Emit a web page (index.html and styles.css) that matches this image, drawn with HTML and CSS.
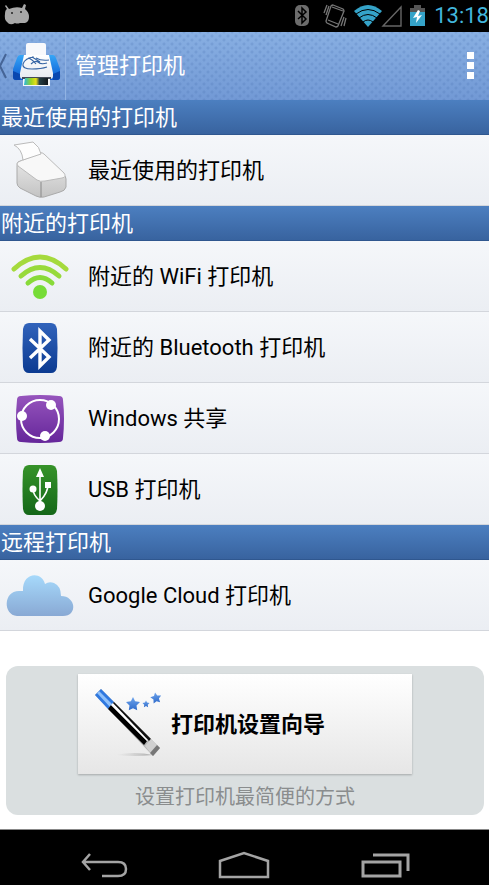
FILE: index.html
```html
<!DOCTYPE html>
<html lang="zh-CN">
<head>
    <meta charset="UTF-8">
    <meta name="viewport" content="width=device-width, initial-scale=1.0">
    <title>管理打印机</title>
    <link rel="stylesheet" href="styles.css">
</head>
<body>
    <div class="status-bar">
        <svg width="26" height="22" viewBox="0 0 26 22">
            <path d="M2 0l3 4q7-3 13-1l2-4 2 1-1 4q4 3 4 8 0 5-4 6h-5q-3 1-5 0-5 3-8-1-3-3-2-8 0-4 2-5L1 1z" fill="#a8a8a8"/>
            <circle cx="8" cy="8" r="1" fill="#222"/>
            <circle cx="17" cy="7" r="1" fill="#222"/>
        </svg>
        <div class="status-icons">
            <svg width="16" height="24" viewBox="0 0 16 24">
                <rect x="1" y="1" width="14" height="21" rx="5" fill="#6c6c6c"/>
                <path d="M4 7l8 8-4 4V4l4 4-8 7" fill="none" stroke="#000" stroke-width="1.5"/>
            </svg>
            <svg class="vibrate" width="22" height="24" viewBox="0 0 22 24">
                <g fill="none" stroke="#777" stroke-width="1.3">
                    <path d="M9 1l10 4q1 1 1 2l-6 15q-1 1-2 1l-9-4q-1-1-1-2L7 2q1-1 2-1zM4 16l10 4M8 3l11 4"/>
                    <path d="M3 1L0 9M5 2L2 11M20 13l-3 9M22 14l-2 8"/>
                </g>
            </svg>
            <svg class="wifi-small" width="28" height="24" viewBox="0 0 28 24">
                <path d="M0 7Q14-5 28 7L14 23z" fill="#35a3c8"/>
                <path d="M2 10q12-9 24 0M5 14q9-7 18 0M9 18q5-4 10 0" fill="none" stroke="#000" stroke-width="1"/>
            </svg>
            <svg width="20" height="24" viewBox="0 0 20 24">
                <path d="M1 22L19 3v19z" fill="none" stroke="#666" stroke-width="1.4"/>
            </svg>
            <svg class="battery" width="15" height="24" viewBox="0 0 15 24">
                <path d="M0 4h4V1h7v3h4v5H0z" fill="#555"/>
                <path d="M0 8h15v14H0z" fill="#35a3c8"/>
                <path d="M8 6l-5 8 4-1-1 6 6-8-4 1 2-5z" fill="#fff"/>
            </svg>
            <span class="clock">13:18</span>
        </div>
    </div>

    <header class="action-bar">
        <button class="up-btn" aria-label="返回">
            <svg width="62" height="46" viewBox="0 0 62 46">
                <defs>
                    <linearGradient id="printerBlue" x2="0" y2="1">
                        <stop offset="0" stop-color="#35a6f7"/>
                        <stop offset="1" stop-color="#0a58d2"/>
                    </linearGradient>
                    <linearGradient id="paperWhite" x2="0" y2="1">
                        <stop offset="0" stop-color="#fff"/>
                        <stop offset="1" stop-color="#e6e9ef"/>
                    </linearGradient>
                    <linearGradient id="inkColors">
                        <stop offset="0" stop-color="#28b8df"/>
                        <stop offset=".3" stop-color="#9bd420"/>
                        <stop offset=".5" stop-color="#e9de1b"/>
                        <stop offset=".65" stop-color="#243c44"/>
                        <stop offset="1" stop-color="#12171c"/>
                    </linearGradient>
                </defs>
                <path d="M6 11L0 23l6 12" fill="none" stroke="#456496" stroke-width="2"/>
                <path d="M20 12h33q2 0 3 3l4 11v8q0 3-3 3H16q-3 0-3-3v-8l4-11q1-3 3-3z" fill="url(#printerBlue)"/>
                <path d="M13 28l7 3v6h-4q-3 0-3-3zM60 28l-7 3v6h4q3 0 3-3z" fill="#0847b0"/>
                <path d="M26 2q0-2 2-2h16q2 0 2 2v10H26z" fill="#f8f9fc"/>
                <path d="M24 12h25l4 18v3q0 3-3 3H23q-3 0-3-3v-3z" fill="url(#paperWhite)"/>
                <path d="M34 14q-9 1-11 7-1 5 9 5 9 0 15-2M28 15q4 1 8 6M32 14q5 3 8 5M36 15q5 3 13 2M31 21q4-4 7-2 3 3 9 1" fill="none" stroke="#3564a4" stroke-width="1.1"/>
                <path d="M22 34h29v2H22z" fill="#454b58"/>
                <path d="M23 36h27v7H23z" fill="#f6f7f9"/>
                <path d="M25 35h23v7H24z" fill="url(#inkColors)"/>
            </svg>
        </button>
        <h1>管理打印机</h1>
        <button class="menu-btn" aria-label="更多">
            <svg width="8" height="28" viewBox="0 0 8 28">
                <path d="M0 0h7v7H0zM0 10h7v7H0zM0 20h7v7H0z" fill="#fff"/>
            </svg>
        </button>
    </header>

    <main>
        <section>
            <h2>最近使用的打印机</h2>
            <ul class="printer-list">
                <li>
                    <a href="#recent">
                        <span class="icon">
                            <svg width="54" height="58" viewBox="0 0 54 58">
                                <defs>
                                    <linearGradient id="boxGray" x2="0" y2="1">
                                        <stop offset="0" stop-color="#eee"/>
                                        <stop offset="1" stop-color="#c3c3c3"/>
                                    </linearGradient>
                                </defs>
                                <path d="M5 20l23-9 22 21q3 2 3 5v8q-1 4-6 5l-16 5q-4 1-8-1L7 46q-3-2-3-5V24q0-3 1-4z" fill="url(#boxGray)" stroke="#aaa" stroke-width="1"/>
                                <path d="M5 20l22-9q2-1 4 1l20 19q3 4-2 5l-17 3q-5 1-8-1L5 24q-2-2 0-4z" fill="#f8f8f8" stroke="#bbb" stroke-width="1"/>
                                <path d="M28 40v15" stroke="#888"/>
                                <path d="M10 18Q9 7 1 3l19-3q7 5 8 12z" fill="#fdfdfd" stroke="#bbb" stroke-width="1"/>
                            </svg>
                        </span>
                        最近使用的打印机
                    </a>
                </li>
            </ul>
        </section>

        <section>
            <h2>附近的打印机</h2>
            <ul class="printer-list">
                <li>
                    <a href="#wifi">
                        <span class="icon">
                            <svg width="58" height="46" viewBox="0 0 58 46">
                                <g fill="none" stroke-width="5" stroke-linecap="round">
                                    <path d="M3 15Q29-9 55 15" stroke="#a5da3d"/>
                                    <path d="M10 22q19-17 38 0" stroke="#98da3b"/>
                                    <path d="M17 29q12-11 24 0" stroke="#88da39"/>
                                </g>
                                <circle cx="29" cy="38" r="7" fill="#76dc37"/>
                            </svg>
                        </span>
                        附近的 WiFi 打印机
                    </a>
                </li>
                <li>
                    <a href="#bluetooth">
                        <span class="icon">
                            <svg width="36" height="52" viewBox="0 0 36 52">
                                <defs>
                                    <linearGradient id="tileBlue" x2="0" y2="1">
                                        <stop offset="0" stop-color="#3163bb"/>
                                        <stop offset="1" stop-color="#0b3a91"/>
                                    </linearGradient>
                                </defs>
                                <path d="M7 1h22q5 0 6 6 1 19 0 38-1 6-6 6H7q-5 0-6-6Q0 26 1 7q1-6 6-6z" fill="url(#tileBlue)"/>
                                <path d="M8 17l19 18-9 9V9l9 9L8 36" fill="none" stroke="#fff" stroke-width="3.4"/>
                            </svg>
                        </span>
                        附近的 Bluetooth 打印机
                    </a>
                </li>
                <li>
                    <a href="#windows">
                        <span class="icon">
                            <svg width="48" height="48" viewBox="0 0 48 48">
                                <defs>
                                    <linearGradient id="tilePurple" x2="0" y2="1">
                                        <stop offset="0" stop-color="#9655bd"/>
                                        <stop offset="1" stop-color="#65269a"/>
                                    </linearGradient>
                                </defs>
                                <path d="M5 1q19-2 38 0 4 0 4 4 2 19 0 38 0 4-4 4-19 2-38 0-4 0-4-4-2-19 0-38 0-4 4-4z" fill="url(#tilePurple)"/>
                                <circle cx="24" cy="24" r="19" fill="none" stroke="#fff" stroke-width="2"/>
                                <circle cx="35" cy="10" r="5" fill="#fff"/>
                                <circle cx="6" cy="21" r="5" fill="#fff"/>
                                <circle cx="29" cy="41" r="5" fill="#fff"/>
                            </svg>
                        </span>
                        Windows 共享
                    </a>
                </li>
                <li>
                    <a href="#usb">
                        <span class="icon">
                            <svg width="36" height="52" viewBox="0 0 36 52">
                                <defs>
                                    <linearGradient id="tileGreen" x2="0" y2="1">
                                        <stop offset="0" stop-color="#369329"/>
                                        <stop offset="1" stop-color="#146718"/>
                                    </linearGradient>
                                </defs>
                                <path d="M7 1h22q5 0 6 6 1 19 0 38-1 6-6 6H7q-5 0-6-6Q0 26 1 7q1-6 6-6z" fill="url(#tileGreen)"/>
                                <path d="M18 9v33M11 25q0 6 7 12M26 20q0 9-8 17" fill="none" stroke="#fff" stroke-width="1.6"/>
                                <path d="M18 4l4 9h-8zM23 18h6v6h-6z" fill="#fff"/>
                                <circle cx="11" cy="25" r="3.5" fill="#fff"/>
                                <circle cx="18" cy="42" r="5" fill="#fff"/>
                            </svg>
                        </span>
                        USB 打印机
                    </a>
                </li>
            </ul>
        </section>

        <section>
            <h2>远程打印机</h2>
            <ul class="printer-list">
                <li>
                    <a href="#cloud">
                        <span class="icon">
                            <svg width="68" height="42" viewBox="0 0 68 42">
                                <defs>
                                    <linearGradient id="cloudBlue" x2="0" y2="1">
                                        <stop offset="0" stop-color="#a6d9fb"/>
                                        <stop offset="1" stop-color="#89a9d4"/>
                                    </linearGradient>
                                </defs>
                                <path d="M11 41C-3 40-3 16 13 16h4C16-3 36-4 39 9q4-3 9-1 7 3 7 13c15 0 17 20 2 20z" fill="url(#cloudBlue)"/>
                            </svg>
                        </span>
                        Google Cloud 打印机
                    </a>
                </li>
            </ul>
        </section>

        <div class="wizard">
            <button class="wizard-btn">
                <svg width="70" height="70" viewBox="0 0 70 70">
                    <defs>
                        <linearGradient id="starBlue" x2="0" y2="1">
                            <stop offset="0" stop-color="#6fa5ec"/>
                            <stop offset="1" stop-color="#2f6bcb"/>
                        </linearGradient>
                        <linearGradient id="shadowGray">
                            <stop offset="0" stop-color="#ccc" stop-opacity="0"/>
                            <stop offset="1" stop-color="#aaa"/>
                        </linearGradient>
                        <path id="star" d="M0-10l3 6 7 1-5 5 1 7-6-3-6 3 1-7-5-5 7-1z"/>
                    </defs>
                    <path d="M22 66q20-4 38 0-18 2-38 0z" fill="url(#shadowGray)"/>
                    <path d="M2 6l6-6 59 59-7 8z" fill="#b4b4b4"/>
                    <path d="M2 6l6-6 13 13-6 7z" fill="#2f78e0"/>
                    <path d="M4 4l2-2 13 13-2 3z" fill="#8fc0fa"/>
                    <path d="M15 20l3-4 36 36-3 4z" fill="#000"/>
                    <path d="M18 16l2-2 36 36-2 2z" fill="#fff"/>
                    <path d="M20 14l1-1 37 37-2 2z" fill="#111"/>
                    <path d="M52 57l6-7 9 9-7 8z" fill="#d0d0d0"/>
                    <path d="M57 64l7-8 3 3-7 8z" fill="#777"/>
                    <g fill="url(#starBlue)">
                        <use href="#star" transform="translate(40 15) scale(.7)"/>
                        <use href="#star" transform="translate(53 15) scale(.35)"/>
                        <use href="#star" transform="translate(63 9) rotate(-10) scale(.55)"/>
                    </g>
                </svg>
                <span>打印机设置向导</span>
            </button>
            <p>设置打印机最简便的方式</p>
        </div>
    </main>

    <nav class="nav-bar">
        <button aria-label="返回">
            <svg width="48" height="28" viewBox="0 0 48 28">
                <path d="M10 2L3 10l7 8M3 10h35q8 0 8 7t-8 7H22" fill="none" stroke="#a4a4a4" stroke-width="2.5"/>
            </svg>
        </button>
        <button aria-label="主屏幕">
            <svg width="52" height="28" viewBox="0 0 52 28">
                <path d="M2 25V9l24-8 24 8v16z" fill="none" stroke="#a4a4a4" stroke-width="2.5"/>
            </svg>
        </button>
        <button aria-label="最近任务">
            <svg width="50" height="28" viewBox="0 0 50 28">
                <path d="M3 10h37v14H3zM13 3h35v16" fill="none" stroke="#a4a4a4" stroke-width="3"/>
            </svg>
        </button>
    </nav>
</body>
</html>
```

FILE: styles.css
```css
* {
    box-sizing: border-box;
}
body {
    margin: 0;
    min-height: 100vh;
    display: flex;
    flex-direction: column;
    background-color: #fff;
    font-family: Roboto, "Noto Sans CJK SC", sans-serif;
    font-size: 22px;
    line-height: 32px;
    color: #000;
}
button {
    border: none;
    padding: 0;
    background: none;
    font: inherit;
    color: inherit;
    cursor: pointer;
}
svg {
    display: block;
    flex-shrink: 0;
    overflow: visible;
}
/* 状态栏 */
.status-bar {
    display: flex;
    align-items: center;
    justify-content: space-between;
    height: 32px;
    padding-left: 4px;
    background-color: #000;
}
.status-icons {
    display: flex;
    align-items: center;
}
.vibrate {
    margin-left: 14px;
}
.wifi-small {
    margin-left: 8px;
}
.battery {
    margin: 0 9px 0 8px;
}
.clock {
    color: #42b6dc;
}
/* 标题栏 */
.action-bar {
    display: flex;
    align-items: center;
    height: 68px;
    background-color: #779fd8;
    background-image:
        radial-gradient(circle, rgba(65, 105, 170, 0.2) 1px, transparent 2px),
        radial-gradient(circle, rgba(65, 105, 170, 0.2) 1px, transparent 2px),
        linear-gradient(#88afe2, #7299d5);
    background-size: 8px 8px, 8px 8px, 100% 100%;
    background-position: 0 0, 4px 4px, 0 0;
}
.up-btn {
    display: flex;
    align-items: center;
    width: 66px;
    height: 100%;
    border-right: 1px solid #91b3e3;
}
h1 {
    flex-grow: 1;
    margin: 0;
    padding-left: 9px;
    font-size: 22px;
    font-weight: normal;
    color: #fff;
}
.menu-btn {
    padding: 8px 14px;
}
/* 打印机列表 */
h2 {
    margin: 0;
    height: 35px;
    padding-left: 1px;
    border-bottom: 1px solid #2f578f;
    background: linear-gradient(#4c7fc0, #38639f);
    font-size: 22px;
    line-height: 35px;
    font-weight: normal;
    color: #fff;
}
.printer-list {
    margin: 0;
    padding: 0;
    list-style: none;
}
.printer-list a {
    display: flex;
    align-items: center;
    height: 71px;
    padding-top: 2px;
    border-bottom: 1px solid #d3d6dc;
    background: linear-gradient(#f5f7fa, #ebeef3);
    color: #000;
    text-decoration: none;
}
.icon {
    display: flex;
    justify-content: center;
    width: 80px;
    margin-right: 8px;
}
/* 设置向导 */
.wizard {
    display: flex;
    flex-direction: column;
    align-items: center;
    margin: 35px 5px 14px 6px;
    padding: 8px 8px 4px;
    border-radius: 12px;
    background-color: #dadfe0;
}
.wizard-btn {
    display: flex;
    align-items: center;
    gap: 8px;
    width: 334px;
    max-width: 100%;
    height: 100px;
    padding: 0 15px;
    background: linear-gradient(#fff, #e6e6e6);
    box-shadow: 0 1px 2px rgba(0, 0, 0, 0.25);
    font-weight: bold;
}
.wizard-btn span {
    padding-top: 2px;
}
.wizard p {
    margin: 9px 0 0;
    font-size: 20px;
    line-height: 28px;
    color: #8a8d8e;
}
/* 底部导航 */
.nav-bar {
    display: flex;
    align-items: center;
    justify-content: center;
    gap: 90px;
    flex-grow: 1;
    padding-top: 16px;
    border-top: 1px solid #888;
    background-color: #000;
}
```
